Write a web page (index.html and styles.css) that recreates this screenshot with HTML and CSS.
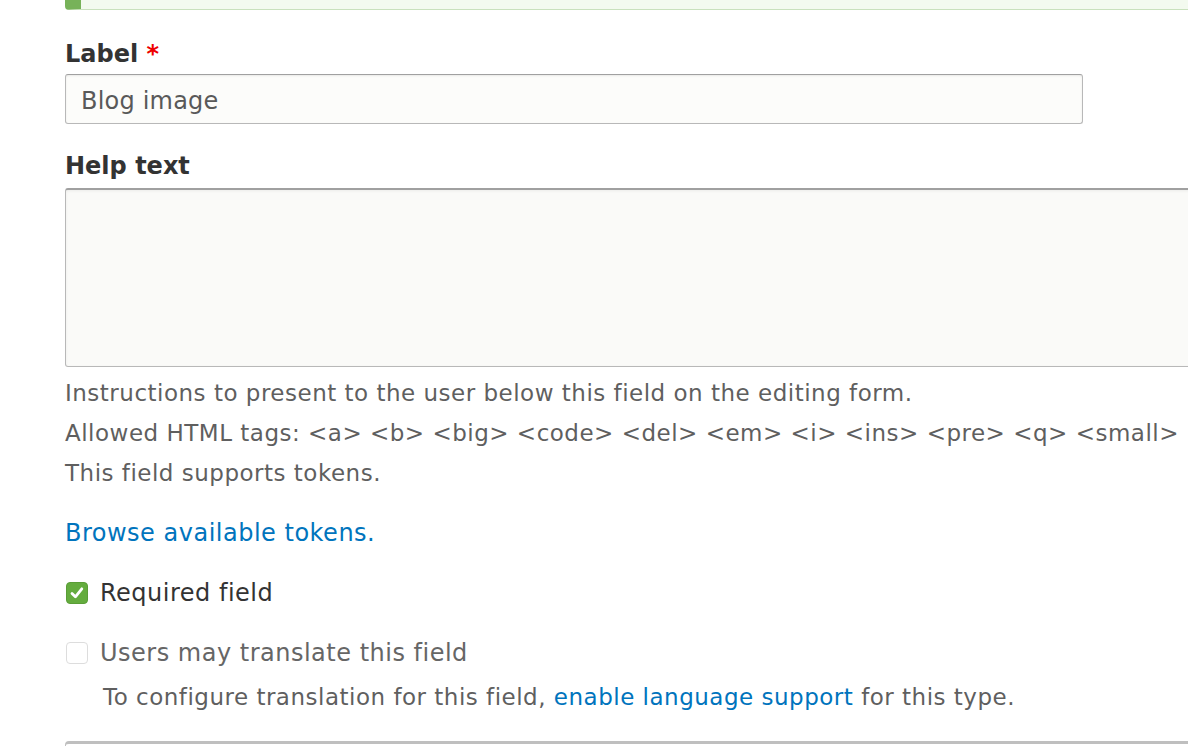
FILE: index.html
```html
<!DOCTYPE html>
<html>
<head>
<meta charset="utf-8">
<link rel="stylesheet" href="styles.css">
</head>
<body>
<div class="page">
  <div class="message"></div>
  <div class="form-item">
    <label class="label">Label <span class="req">*</span></label>
    <div class="input">Blog image</div>
  </div>
  <div class="form-item help">
    <label class="label">Help text</label>
    <div class="textarea"></div>
    <div class="desc">
      <div class="line">Instructions to present to the user below this field on the editing form.</div>
      <div class="line">Allowed HTML tags: &lt;a&gt; &lt;b&gt; &lt;big&gt; &lt;code&gt; &lt;del&gt; &lt;em&gt; &lt;i&gt; &lt;ins&gt; &lt;pre&gt; &lt;q&gt; &lt;small&gt;</div>
      <div class="line">This field supports tokens.</div>
    </div>
  </div>
  <a class="link tokens" href="#">Browse available tokens.</a>
  <div class="check-row">
    <span class="box checked"><svg viewBox="0 0 22 22" width="22" height="22"><path d="M6 11.4 L9.4 14.8 L15.8 6.8" fill="none" stroke="#fff" stroke-width="2.8" stroke-linecap="round" stroke-linejoin="round"/></svg></span>
    <span class="check-label">Required field</span>
  </div>
  <div class="check-row disabled">
    <span class="box"></span>
    <span class="check-label">Users may translate this field</span>
  </div>
  <div class="check-desc">To configure translation for this field, <a class="link" href="#">enable language support</a> for this type.</div>
  <div class="next-box"></div>
</div>
</body>
</html>
```
FILE: styles.css
```css
html, body {
  margin: 0;
  padding: 0;
  background: #fff;
  overflow: hidden;
}
body {
  font-family: "DejaVu Sans", "Lucida Grande", sans-serif;
  color: #333;
  width: 1188px;
  height: 746px;
}
.page {
  padding-left: 65px;
  width: 1400px;
}
.message {
  height: 9px;
  background: #f3faef;
  border-left: 16px solid #77b259;
  border-bottom: 1px solid #c9e1bd;
  border-bottom-left-radius: 4px;
}
.form-item {
  display: flex;
  flex-direction: column;
}
.label {
  font-weight: bold;
  font-size: 24px;
  line-height: 30px;
  color: #333;
  margin-top: 29px;
}
.req {
  color: #e00;
}
.input {
  margin-top: 5px;
  height: 48px;
  box-sizing: content-box;
  border: 1px solid #b8b8b8;
  border-top-color: #a0a0a0;
  border-radius: 3px;
  background: #fcfcfa;
  box-shadow: inset 0 1px 2px rgba(0,0,0,0.08);
  font-size: 24px;
  letter-spacing: 0.2px;
  line-height: 52px;
  padding: 0 0 0 15px;
  width: 1001px;
  color: #595959;
}
.help .label {
  margin-top: 27px;
}
.textarea {
  margin-top: 7px;
  height: 176px;
  border: 1px solid #b8b8b8;
  border-top: 2px solid #a0a0a0;
  border-radius: 3px;
  background: #fafaf8;
  box-shadow: inset 0 1px 3px rgba(0,0,0,0.06);
}
.desc {
  margin-top: 6px;
  font-size: 23px;
  letter-spacing: 0.5px;
  color: #5f5f5f;
}
.line {
  line-height: 40px;
  white-space: nowrap;
}
.link {
  color: #0074bd;
  text-decoration: none;
}
.tokens {
  display: block;
  margin-top: 20px;
  font-size: 24px;
  letter-spacing: 0.5px;
  line-height: 40px;
}
.check-row {
  display: flex;
  align-items: center;
  gap: 12px;
  margin-top: 20px;
  height: 40px;
  font-size: 24px;
  letter-spacing: 0.5px;
}
.box {
  width: 22px;
  height: 22px;
  margin-left: 1px;
  border-radius: 4px;
  border: 1px solid #ccc;
  background: #fff;
  box-sizing: border-box;
  display: flex;
  align-items: center;
  justify-content: center;
  flex: none;
}
.box svg {
  flex: none;
}
.box.checked {
  background: #64ac3e;
  border-color: #5a9d37;
}
.check-label {
  color: #333;
}
.disabled .check-label {
  color: #666;
}
.disabled .box {
  border-color: #ddd;
}
.check-desc {
  padding-left: 38px;
  font-size: 23px;
  letter-spacing: 0.5px;
  line-height: 40px;
  color: #5f5f5f;
  margin-top: 4px;
  white-space: nowrap;
}
.next-box {
  margin-top: 24px;
  height: 40px;
  border: 1px solid #bfbfbf;
  border-top: 3px solid #bfbfbf;
  border-radius: 4px 0 0 0;
}
```
